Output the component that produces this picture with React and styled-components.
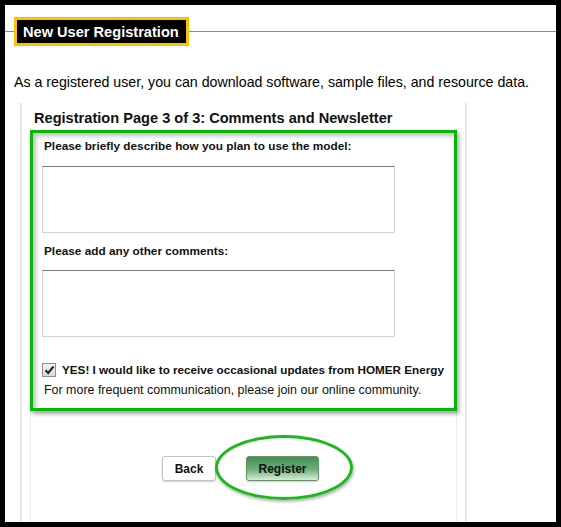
import React from 'react';
import styled, { createGlobalStyle } from 'styled-components';

const GlobalStyle = createGlobalStyle`
  html, body {
    margin: 0;
    padding: 0;
    background: #000;
  }
  body {
    font-family: 'Liberation Sans', Arial, sans-serif;
  }
`;

const Frame = styled.div`
  margin: 5px;
  width: 551px;
  height: 517px;
  background: #fff;
  display: flex;
  flex-direction: column;
  overflow: hidden;
`;

const Header = styled.div`
  display: flex;
  align-items: center;
  padding-top: 12px;
`;

const Rule = styled.div`
  height: 1px;
  background: #8a8a8a;
  width: ${p => (p.$grow ? 'auto' : `${p.$w}px`)};
  flex: ${p => (p.$grow ? 1 : 'none')};
`;

const TitleBox = styled.div`
  box-sizing: border-box;
  width: 175px;
  height: 29px;
  border: 3px solid #ffc000;
  background: #000;
  color: #fff;
  font-weight: bold;
  font-size: 14.6px;
  display: flex;
  align-items: center;
  padding-left: 6px;
`;

const Intro = styled.p`
  margin: 28px 0 0 9px;
  font-size: 14.2px;
  line-height: 16px;
  color: #000;
`;

const Panel = styled.div`
  flex: 1;
  margin: 13px 0 0 15px;
  width: 447px;
  box-sizing: border-box;
  border-left: 2px solid #e6e6e6;
  border-right: 2px solid #e6e6e6;
  display: flex;
  flex-direction: column;
`;

const PanelTitle = styled.h2`
  margin: 0;
  padding: 7px 0 0 12px;
  font-size: 14.6px;
  line-height: 16px;
  font-weight: bold;
  color: #111;
`;

const Column = styled.div`
  flex: 1;
  margin: 4px 8px 0 8px;
  border-left: 1px solid #ececec;
  border-right: 1px solid #ececec;
  display: flex;
  flex-direction: column;
`;

const Highlight = styled.div`
  margin: 0 -1px;
  height: 281px;
  box-sizing: border-box;
  border: 3px solid #07b807;
  box-shadow: 2px 3px 4px rgba(0, 0, 0, 0.35), inset 3px 3px 4px rgba(0, 0, 0, 0.25);
  padding: 6px 9px 0 9px;
  display: flex;
  flex-direction: column;
`;

const Label = styled.label`
  font-size: 11.8px;
  line-height: 14px;
  font-weight: bold;
  color: #111;
  padding-left: 2px;
  margin-top: ${p => p.$top || 0}px;
`;

const TextArea = styled.textarea`
  box-sizing: border-box;
  width: 353px;
  height: 67px;
  flex: none;
  margin-top: ${p => p.$top || 0}px;
  border: 1px solid #d4d4d4;
  border-top-color: #7a7a7a;
  resize: none;
  outline: none;
  padding: 2px;
  font-family: inherit;
`;

const CheckRow = styled.div`
  display: flex;
  align-items: center;
  margin-top: 26px;
  gap: 6px;
`;

const Box = styled.span`
  box-sizing: border-box;
  flex: none;
  width: 14px;
  height: 14px;
  border: 1px solid #8f8f8f;
  background: linear-gradient(#f4f4f4, #d8d8d8);
  display: flex;
  align-items: center;
  justify-content: center;
`;

const CheckLabel = styled.span`
  font-size: 11.7px;
  line-height: 14px;
  font-weight: bold;
  color: #111;
  white-space: nowrap;
`;

const Note = styled.p`
  margin: 6px 0 0 2px;
  font-size: 12.45px;
  line-height: 14px;
  color: #111;
  white-space: nowrap;
`;

const Actions = styled.div`
  display: flex;
  justify-content: center;
  gap: 30px;
  margin-top: 45px;
  padding-right: 6px;
`;

const Button = styled.button`
  position: relative;
  box-sizing: border-box;
  height: 25px;
  width: ${p => p.$w}px;
  border-radius: 3px;
  border: 1px solid ${p => (p.$primary ? '#6a8f6a' : '#c4c4c4')};
  background: ${p => (p.$primary ? 'linear-gradient(#3f8f4f, #6fb07b 55%, #d8eed8)' : '#fff')};
  box-shadow: 0 1px 2px rgba(0, 0, 0, 0.2);
  font-family: inherit;
  font-size: 12px;
  font-weight: bold;
  color: #111;
  padding: 0;
`;

const Ring = styled.span`
  position: absolute;
  left: -32px;
  top: -22px;
  width: 138px;
  height: 65px;
  box-sizing: border-box;
  border: 3px solid #1cb81c;
  border-radius: 50%;
  box-shadow: 1px 2px 3px rgba(0, 0, 0, 0.3);
  pointer-events: none;
`;

export default function App() {
  return (
    <>
      <GlobalStyle />
      <Frame>
        <Header>
          <Rule $w={9} />
          <TitleBox>New User Registration</TitleBox>
          <Rule $grow />
        </Header>
        <Intro>As a registered user, you can download software, sample files, and resource data.</Intro>
        <Panel>
          <PanelTitle>Registration Page 3 of 3: Comments and Newsletter</PanelTitle>
          <Column>
            <Highlight>
              <Label>Please briefly describe how you plan to use the model:</Label>
              <TextArea $top={13} />
              <Label $top={11}>Please add any other comments:</Label>
              <TextArea $top={12} />
              <CheckRow>
                <Box>
                  <svg width="11" height="10" viewBox="0 0 11 10">
                    <path d="M1.5 5.2 L4.2 8 L9.5 1.5" fill="none" stroke="#222" strokeWidth="2" />
                  </svg>
                </Box>
                <CheckLabel>YES! I would like to receive occasional updates from HOMER Energy</CheckLabel>
              </CheckRow>
              <Note>For more frequent communication, please join our online community.</Note>
            </Highlight>
            <Actions>
              <Button $w={54}>Back</Button>
              <Button $w={73} $primary>
                Register
                <Ring />
              </Button>
            </Actions>
          </Column>
        </Panel>
      </Frame>
    </>
  );
}
